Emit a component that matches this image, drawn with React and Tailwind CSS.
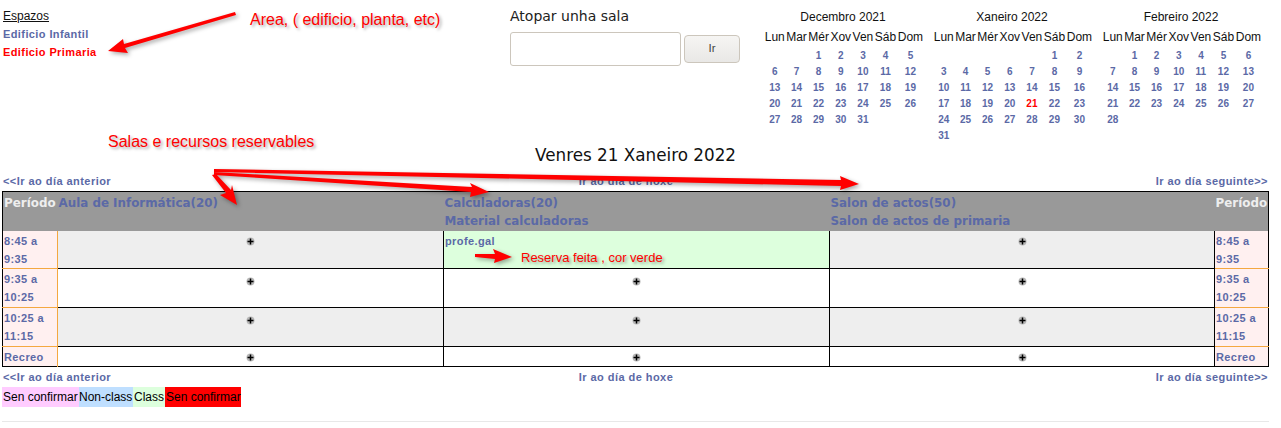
import React from 'react';

const blank = null;

const calendars = [
  {
    title: 'Decembro 2021',
    weeks: [
      [blank, blank, 1, 2, 3, 4, 5],
      [6, 7, 8, 9, 10, 11, 12],
      [13, 14, 15, 16, 17, 18, 19],
      [20, 21, 22, 23, 24, 25, 26],
      [27, 28, 29, 30, 31, blank, blank],
    ],
  },
  {
    title: 'Xaneiro 2022',
    weeks: [
      [blank, blank, blank, blank, blank, 1, 2],
      [3, 4, 5, 6, 7, 8, 9],
      [10, 11, 12, 13, 14, 15, 16],
      [17, 18, 19, 20, 21, 22, 23],
      [24, 25, 26, 27, 28, 29, 30],
      [31, blank, blank, blank, blank, blank, blank],
    ],
    today: 21,
  },
  {
    title: 'Febreiro 2022',
    weeks: [
      [blank, 1, 2, 3, 4, 5, 6],
      [7, 8, 9, 10, 11, 12, 13],
      [14, 15, 16, 17, 18, 19, 20],
      [21, 22, 23, 24, 25, 26, 27],
      [28, blank, blank, blank, blank, blank, blank],
    ],
  },
];

const days = ['Lun', 'Mar', 'Mér', 'Xov', 'Ven', 'Sáb', 'Dom'];

const rows = [
  { period: ['8:45 a', '9:35'], alt: true, booked: true, h: 'h-[38px]', pad: 'pt-[6px]' },
  { period: ['9:35 a', '10:25'], alt: false, h: 'h-[39px]', pad: 'pt-[8px]' },
  { period: ['10:25 a', '11:15'], alt: true, h: 'h-[39px]', pad: 'pt-[8px]' },
  { period: ['Recreo'], alt: false, h: 'h-[20px]', pad: 'pt-[6px]' },
];

function Calendar({ title, weeks, today }) {
  return (
    <div className="w-[169px] shrink-0">
      <div className="h-[27px] w-[158px] pt-[10px] text-center text-[12px] leading-[14px] text-[#111]">{title}</div>
      <table className="w-[160px] border-collapse">
        <thead>
          <tr className="h-[21px]">
            {days.map((d) => (
              <th key={d} className="p-0 pb-[1px] text-center text-[12px] leading-[14px] font-normal text-[#111]">{d}</th>
            ))}
          </tr>
        </thead>
        <tbody>
          {weeks.map((week, i) => (
            <tr key={i} className="h-[16px]">
              {week.map((n, j) => (
                <td
                  key={j}
                  className={`p-0 text-center text-[10px] leading-[16px] font-bold ${n === today ? 'text-[#ff0000]' : 'text-[#5b69a6]'}`}
                >
                  {n}
                </td>
              ))}
            </tr>
          ))}
        </tbody>
      </table>
    </div>
  );
}

function DayNav() {
  return (
    <div className="flex h-[14px] w-[1268px] justify-between pl-[3px] text-[11px] leading-[14px] font-bold tracking-[0.45px] text-[#5b69a6]">
      <span className="w-[300px]">&lt;&lt;Ir ao día anterior</span>
      <span className="mr-[19px]">Ir ao día de hoxe</span>
      <span className="w-[300px] text-right">Ir ao día seguinte&gt;&gt;</span>
    </div>
  );
}

function AddIcon() {
  return (
    <svg width="9" height="9" viewBox="0 0 9 9" className="mx-auto block">
      <circle cx="4.5" cy="4.5" r="4" fill="#b8b8b8" />
      <path d="M4.5 1.5v6M1.5 4.5h6" stroke="#000" strokeWidth="1.5" />
    </svg>
  );
}

function PeriodCell({ lines, left, last }) {
  return (
    <td
      className={`bg-[#fff0f0] px-[1px] pt-[1px] align-top text-[11px] leading-[18px] font-bold tracking-[0.4px] text-[#5b69a6] ${left ? 'border-r border-r-[#f4a840]' : 'border-l border-l-black'} ${last ? '' : 'border-b border-b-[#f4a840]'}`}
    >
      {lines.map((l) => (
        <div key={l}>{l}</div>
      ))}
    </td>
  );
}

function SlotCell({ alt, last, right, pad }) {
  return (
    <td className={`px-[1px] align-top ${pad} ${alt ? 'bg-[#eeeeee]' : 'bg-white'} ${last ? '' : 'border-b border-b-black'} ${right ? '' : 'border-r border-r-black'}`}>
      <AddIcon />
    </td>
  );
}

function Arrow({ points }) {
  return <polygon points={points} fill="#ff0000" />;
}

function Note({ className, children }) {
  return (
    <span className={`absolute whitespace-nowrap text-[#ff0000] [text-shadow:2px_2px_3px_rgba(0,0,0,0.35)] ${className}`}>
      {children}
    </span>
  );
}

export default function App() {
  return (
    <div className="relative h-[428px] w-[1281px] overflow-hidden bg-white font-['Liberation_Sans',Arial,sans-serif]">
      {/* Top area */}
      <div className="flex h-[145px]">
        <div className="w-[510px] shrink-0 pl-[3px] pt-[9px]">
          <div className="text-[12px] leading-[14px] text-[#111] underline">Espazos</div>
          <div className="mt-[4px] text-[11px] leading-[14px] font-bold tracking-[0.4px] text-[#5b69a6]">Edificio Infantil</div>
          <div className="mt-[4px] text-[11px] leading-[14px] font-bold tracking-[0.4px] text-[#ff0000]">Edificio Primaria</div>
        </div>
        <div className="w-[254px] shrink-0 pt-[7px]">
          <div className="font-['DejaVu_Sans',sans-serif] text-[14px] leading-[18px] text-[#222]">Atopar unha sala</div>
          <div className="mt-[7px] flex items-center gap-[3px]">
            <input className="h-[34px] w-[171px] rounded-[3px] border border-[#ccc6bc] bg-white" />
            <button className="h-[28px] w-[56px] rounded-[4px] border border-[#ccc6bc] bg-linear-to-b from-[#f6f5f3] to-[#e9e8e6] text-[11.5px] text-[#444]">Ir</button>
          </div>
        </div>
        <div className="flex">
          {calendars.map((c) => (
            <Calendar key={c.title} {...c} />
          ))}
        </div>
      </div>

      <h2 className="h-[29px] pl-[535px] font-['DejaVu_Sans',sans-serif] text-[16.8px] leading-[20px] font-normal text-[#111]">Venres 21 Xaneiro 2022</h2>

      <DayNav />

      {/* Timetable */}
      <div className="mx-[2px] mt-[3px] w-[1267px]">
        <table className="w-full table-fixed border-collapse border border-black">
          <colgroup>
            <col className="w-[55px]" />
            <col className="w-[386px]" />
            <col className="w-[386px]" />
            <col className="w-[385px]" />
            <col className="w-[54px]" />
          </colgroup>
          <thead>
            <tr className="h-[39px] bg-[#999999] font-['DejaVu_Sans',sans-serif] text-[11.9px] leading-[18px] font-bold text-[#5b69a6]">
              <th className="p-0 pl-[1px] pt-[2px] text-left align-top font-bold text-[#eeeeee]">Período</th>
              <th className="p-0 pl-[1px] pt-[2px] text-left align-top font-bold">Aula de Informática(20)</th>
              <th className="p-0 pl-[1px] pt-[2px] text-left align-top font-bold">
                <div>Calculadoras(20)</div>
                <div>Material calculadoras</div>
              </th>
              <th className="p-0 pl-[1px] pt-[2px] text-left align-top font-bold">
                <div>Salon de actos(50)</div>
                <div>Salon de actos de primaria</div>
              </th>
              <th className="p-0 pl-[1px] pt-[2px] text-left align-top font-bold text-[#eeeeee]">Período</th>
            </tr>
          </thead>
          <tbody>
            {rows.map((r, i) => {
              const last = i === rows.length - 1;
              return (
                <tr key={i} className={r.h}>
                  <PeriodCell lines={r.period} left last={last} />
                  <SlotCell alt={r.alt} last={last} pad={r.pad} />
                  {r.booked ? (
                    <td className="border-r border-b border-black bg-[#ddffdd] px-[1px] pt-[1px] align-top text-[11px] leading-[18px] font-bold tracking-[0.4px] text-[#5b69a6]">profe.gal</td>
                  ) : (
                    <SlotCell alt={r.alt} last={last} pad={r.pad} />
                  )}
                  <SlotCell alt={r.alt} last={last} right pad={r.pad} />
                  <PeriodCell lines={r.period} last={last} />
                </tr>
              );
            })}
          </tbody>
        </table>
      </div>

      <div className="mt-[3px]">
        <DayNav />
      </div>

      {/* Legend */}
      <div className="mx-[2px] mt-[3px] flex h-[20px] text-[12px] leading-[20px] text-black">
        <span className="w-[77px] bg-[#ffccff] pl-[1px] whitespace-nowrap">Sen confirmar</span>
        <span className="w-[54px] bg-[#bfdfff] whitespace-nowrap">Non-class</span>
        <span className="w-[32px] bg-[#ddffdd] pl-[1px]">Class</span>
        <span className="w-[76px] bg-[#ff0000] pl-[1px] whitespace-nowrap">Sen confirmar</span>
      </div>
      <hr className="mx-[2px] mt-[14px] w-[1267px] border-t border-[#e8e8e8]" />

      {/* Annotations drawn over the screenshot */}
      <svg className="pointer-events-none absolute top-0 left-0 [filter:drop-shadow(2px_2px_2px_rgba(0,0,0,0.35))]" width="1281" height="428">
        <Arrow points="235,12 236,15 125,48 128,53 108,51 123,39 124,44" />
        <Arrow points="214,169 841,180 840,176 859,184 840,190 841,186 214,172" />
        <Arrow points="214,172 472,187 470,183 489,192 470,197 471,192 214,175" />
        <Arrow points="212,175 216,174 231,190 232,185 237,205 220,195 226,193" />
        <Arrow points="475,254 495,254 493,249 512,257 494,263 495,259 475,257" />
      </svg>
      <Note className="top-[10px] left-[250px] text-[16px] leading-[20px]">Area, ( edificio, planta, etc)</Note>
      <Note className="top-[132px] left-[108px] text-[16px] leading-[20px]">Salas e recursos reservables</Note>
      <Note className="top-[250px] left-[521px] text-[13px] leading-[16px]">Reserva feita , cor verde</Note>
    </div>
  );
}
